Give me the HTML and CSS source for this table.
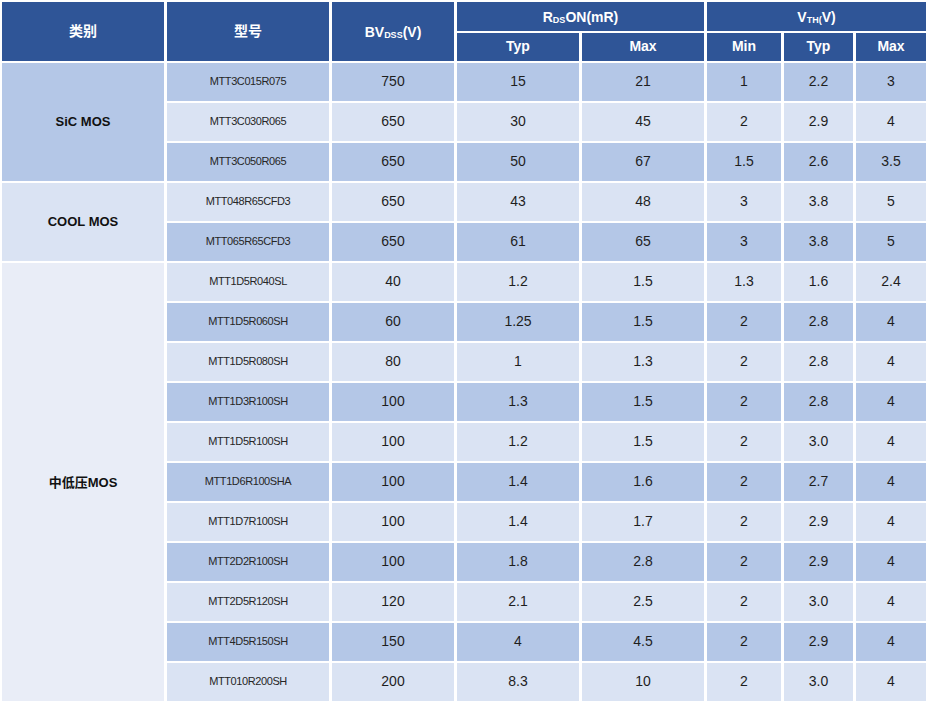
FILE: index.html
```html
<!DOCTYPE html>
<html lang="zh">
<head>
<meta charset="utf-8">
<title>MOS 产品参数</title>
<link rel="stylesheet" href="styles.css">
</head>
<body>
<div class="table">
  <div class="th span-r2 top">类别</div>
  <div class="th span-r2 top">型号</div>
  <div class="th span-r2">BV<sub>DSS</sub>(V)</div>
  <div class="th span-c2">R<sub>DS</sub>ON(mR)</div>
  <div class="th span-c3">V<sub>TH(</sub>V)</div>
  <div class="th sub-h">Typ</div>
  <div class="th sub-h">Max</div>
  <div class="th sub-h">Min</div>
  <div class="th sub-h">Typ</div>
  <div class="th sub-h">Max</div>

  <div class="group g-sic span-r3">SiC MOS</div>
  <div class="td dk model">MTT3C015R075</div><div class="td dk">750</div><div class="td dk">15</div><div class="td dk">21</div><div class="td dk">1</div><div class="td dk">2.2</div><div class="td dk">3</div>
  <div class="td lt model">MTT3C030R065</div><div class="td lt">650</div><div class="td lt">30</div><div class="td lt">45</div><div class="td lt">2</div><div class="td lt">2.9</div><div class="td lt">4</div>
  <div class="td dk model">MTT3C050R065</div><div class="td dk">650</div><div class="td dk">50</div><div class="td dk">67</div><div class="td dk">1.5</div><div class="td dk">2.6</div><div class="td dk">3.5</div>

  <div class="group g-cool span-r2">COOL MOS</div>
  <div class="td lt model">MTT048R65CFD3</div><div class="td lt">650</div><div class="td lt">43</div><div class="td lt">48</div><div class="td lt">3</div><div class="td lt">3.8</div><div class="td lt">5</div>
  <div class="td dk model">MTT065R65CFD3</div><div class="td dk">650</div><div class="td dk">61</div><div class="td dk">65</div><div class="td dk">3</div><div class="td dk">3.8</div><div class="td dk">5</div>

  <div class="group g-mv span-r11">中低压MOS</div>
  <div class="td lt model">MTT1D5R040SL</div><div class="td lt">40</div><div class="td lt">1.2</div><div class="td lt">1.5</div><div class="td lt">1.3</div><div class="td lt">1.6</div><div class="td lt">2.4</div>
  <div class="td dk model">MTT1D5R060SH</div><div class="td dk">60</div><div class="td dk">1.25</div><div class="td dk">1.5</div><div class="td dk">2</div><div class="td dk">2.8</div><div class="td dk">4</div>
  <div class="td lt model">MTT1D5R080SH</div><div class="td lt">80</div><div class="td lt">1</div><div class="td lt">1.3</div><div class="td lt">2</div><div class="td lt">2.8</div><div class="td lt">4</div>
  <div class="td dk model">MTT1D3R100SH</div><div class="td dk">100</div><div class="td dk">1.3</div><div class="td dk">1.5</div><div class="td dk">2</div><div class="td dk">2.8</div><div class="td dk">4</div>
  <div class="td lt model">MTT1D5R100SH</div><div class="td lt">100</div><div class="td lt">1.2</div><div class="td lt">1.5</div><div class="td lt">2</div><div class="td lt">3.0</div><div class="td lt">4</div>
  <div class="td dk model">MTT1D6R100SHA</div><div class="td dk">100</div><div class="td dk">1.4</div><div class="td dk">1.6</div><div class="td dk">2</div><div class="td dk">2.7</div><div class="td dk">4</div>
  <div class="td lt model">MTT1D7R100SH</div><div class="td lt">100</div><div class="td lt">1.4</div><div class="td lt">1.7</div><div class="td lt">2</div><div class="td lt">2.9</div><div class="td lt">4</div>
  <div class="td dk model">MTT2D2R100SH</div><div class="td dk">100</div><div class="td dk">1.8</div><div class="td dk">2.8</div><div class="td dk">2</div><div class="td dk">2.9</div><div class="td dk">4</div>
  <div class="td lt model">MTT2D5R120SH</div><div class="td lt">120</div><div class="td lt">2.1</div><div class="td lt">2.5</div><div class="td lt">2</div><div class="td lt">3.0</div><div class="td lt">4</div>
  <div class="td dk model">MTT4D5R150SH</div><div class="td dk">150</div><div class="td dk">4</div><div class="td dk">4.5</div><div class="td dk">2</div><div class="td dk">2.9</div><div class="td dk">4</div>
  <div class="td lt model">MTT010R200SH</div><div class="td lt">200</div><div class="td lt">8.3</div><div class="td lt">10</div><div class="td lt">2</div><div class="td lt">3.0</div><div class="td lt">4</div>
</div>
</body>
</html>
```

FILE: styles.css
```css
html, body {
  margin: 0;
  padding: 0;
  background: #ffffff;
  overflow: hidden;
}

.table {
  display: grid;
  grid-template-columns: 162px 162px 122px 122px 122px 74px 69px 70px;
  grid-template-rows: 29px 28px repeat(16, 38px);
  column-gap: 3px;
  row-gap: 2px;
  padding: 2px 2px 0 2px;
  font-family: "Liberation Sans", Arial, "Noto Sans CJK SC", sans-serif;
}

.th, .td, .group {
  display: flex;
  align-items: center;
  justify-content: center;
  text-align: center;
}

.th {
  background: #2f5597;
  color: #ffffff;
  font-weight: bold;
  font-size: 14px;
}

.th.top {
  padding-bottom: 3px;
}

.th.sub-h {
  padding-bottom: 2px;
}

.th sub {
  font-size: 9px;
  vertical-align: baseline;
  position: relative;
  top: 3px;
  line-height: 0;
}

.span-r2 { grid-row: span 2; }
.span-r3 { grid-row: span 3; }
.span-r11 { grid-row: span 11; }
.span-c2 { grid-column: span 2; }
.span-c3 { grid-column: span 3; }

.td {
  color: #1e1e1e;
  font-size: 14px;
  padding-bottom: 2px;
}

.td.model {
  font-size: 11px;
  letter-spacing: -0.4px;
  color: #262626;
}

.dk { background: #b4c7e7; }
.lt { background: #dae3f3; }

.group {
  font-weight: bold;
  font-size: 13px;
  color: #111111;
  padding-bottom: 2px;
}

.g-sic { background: #b4c7e7; }
.g-cool { background: #dae3f3; }
.g-mv { background: #e9edf7; }
```
